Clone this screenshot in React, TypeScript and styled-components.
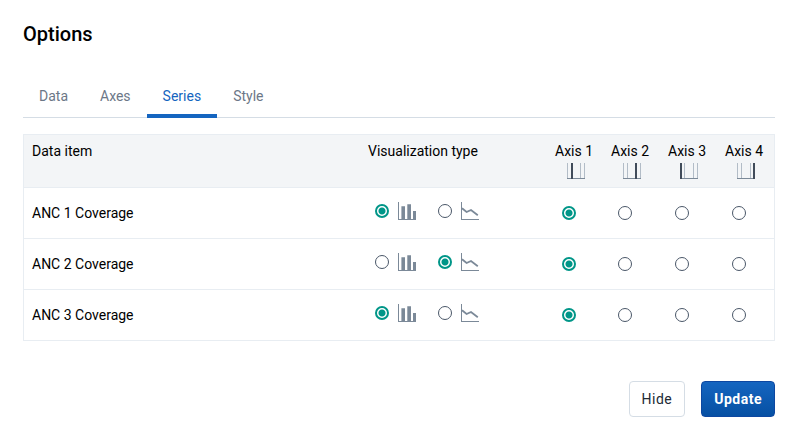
import React, { useState } from "react";
import styled, { createGlobalStyle } from "styled-components";

const GlobalStyle = createGlobalStyle`
  *, *::before, *::after { box-sizing: border-box; }
  body {
    margin: 0;
    background: #fff;
    color: #000;
    font-family: Roboto, sans-serif;
    font-size: 14px;
    line-height: 18px;
  }
`;

const Dialog = styled.main`
  padding: 22px 22px 24px 23px;
`;

const Title = styled.h1`
  margin: 0;
  font-size: 20px;
  line-height: 24px;
  font-weight: 500;
`;

const TabBar = styled.div`
  display: flex;
  margin-top: 28px;
  border-bottom: 1px solid #d5dde5;
`;

const Tab = styled.button<{ $active: boolean }>`
  margin: 0 0 -1px;
  padding: 13px 16px 9px;
  border: 0;
  border-bottom: 4px solid ${(p) => (p.$active ? "#1565c0" : "transparent")};
  background: none;
  color: ${(p) => (p.$active ? "#1565c0" : "#6c7787")};
  font: inherit;
  line-height: 18px;
  cursor: pointer;
`;

const Table = styled.table`
  width: 100%;
  margin-top: 16px;
  border: 1px solid #e8edf2;
  border-spacing: 0;
  table-layout: fixed;
`;

const Column = styled.col<{ $width?: number }>`
  width: ${(p) => (p.$width ? `${p.$width}px` : "auto")};
`;

const HeadCell = styled.th`
  height: 53px;
  padding: 7px 0 0 8px;
  border-bottom: 1px solid #e8edf2;
  background: #f3f5f7;
  font-weight: 400;
  text-align: left;
  vertical-align: top;
  white-space: nowrap;

  svg {
    display: block;
    margin: 3px 0 0 12px;
  }
`;

const AxisHeadCell = styled(HeadCell)`
  padding-left: 9px;
`;

const Row = styled.tr`
  &:not(:last-child) > * {
    border-bottom: 1px solid #e8edf2;
  }

  &:last-child > * {
    height: 50px;
  }
`;

const NameCell = styled.th`
  height: 51px;
  padding: 0 8px;
  font-weight: 400;
  text-align: left;
`;

const Cell = styled.td`
  padding: 0;
`;

const TypeOptions = styled.div`
  display: flex;
  gap: 22px;
  padding: 0 0 4px 15px;
`;

const TypeOption = styled.label`
  display: flex;
  align-items: center;
  gap: 9px;
`;

const AxisOption = styled.label`
  display: flex;
  padding-left: 16px;
`;

const Radio = styled.input.attrs({ type: "radio" })`
  appearance: none;
  width: 14px;
  height: 14px;
  margin: 0;
  border: 1px solid #4a5768;
  border-radius: 50%;
  background: #fff;

  &:checked {
    border: 2px solid #009688;
    background: radial-gradient(circle, #009688 3px, #fff 4px);
  }
`;

const Actions = styled.div`
  display: flex;
  justify-content: flex-end;
  gap: 16px;
  margin-top: 40px;
`;

const Button = styled.button<{ $primary?: boolean }>`
  height: 36px;
  padding: 0 12px;
  border: 1px solid ${(p) => (p.$primary ? "#0d47a1" : "#d5dde5")};
  border-radius: 4px;
  background: ${(p) => (p.$primary ? "linear-gradient(#1565c0, #0650a3)" : "#fff")};
  color: ${(p) => (p.$primary ? "#fff" : "#212934")};
  font: inherit;
  font-weight: ${(p) => (p.$primary ? 700 : 400)};
  letter-spacing: 0.5px;
  cursor: pointer;
`;

const ColumnIcon = () => (
  <svg width="18" height="18" viewBox="0 0 18 18" role="img" aria-label="Column">
    <path d="M0 0h1v17h17v1H0z" fill="#7b8998" />
    <path d="M3.4 4.3H7V17H3.4zM9.3 2.2H13V17H9.3zM15 9h3v8h-3z" fill="#7b8998" />
  </svg>
);

const LineIcon = () => (
  <svg width="18" height="18" viewBox="0 0 18 18" role="img" aria-label="Line">
    <path d="M0 0h1v17h17v1H0z" fill="#7b8998" />
    <path d="M1 6.2l4.6 3.8 4.4-2 6.8 5.2" fill="none" stroke="#7b8998" strokeWidth="1.8" />
  </svg>
);

const AXIS_LINES = [
  { heavy: 4, light: [0, 13, 17] },
  { heavy: 12, light: [0, 4, 17] },
  { heavy: 0, light: [4, 13, 17] },
  { heavy: 16, light: [0, 4, 13] },
];

const AxisIcon = ({ index }: { index: number }) => (
  <svg width="18" height="16" viewBox="0 0 18 16" aria-hidden="true">
    {AXIS_LINES[index].light.map((x) => (
      <rect key={x} x={x} width="1" height="15" fill="#b2bcc7" />
    ))}
    <rect y="15" width="18" height="1" fill="#7b8998" />
    <rect x={AXIS_LINES[index].heavy} width="2" height="16" fill="#404b5a" />
  </svg>
);

const TABS = ["Data", "Axes", "Series", "Style"];
const AXES = [1, 2, 3, 4];
const TYPES = [
  { id: "column", Icon: ColumnIcon },
  { id: "line", Icon: LineIcon },
];
const SERIES = [
  { name: "ANC 1 Coverage", type: "column" },
  { name: "ANC 2 Coverage", type: "line" },
  { name: "ANC 3 Coverage", type: "column" },
];

export default function App() {
  const [tab, setTab] = useState("Series");

  return (
    <Dialog>
      <GlobalStyle />
      <Title>Options</Title>
      <TabBar role="tablist">
        {TABS.map((name) => (
          <Tab
            key={name}
            type="button"
            role="tab"
            aria-selected={tab === name}
            $active={tab === name}
            onClick={() => setTab(name)}
          >
            {name}
          </Tab>
        ))}
      </TabBar>
      <Table>
        <colgroup>
          <Column />
          <Column $width={186} />
          <Column $width={56} />
          <Column $width={57} />
          <Column $width={57} />
          <Column $width={58} />
        </colgroup>
        <thead>
          <tr>
            <HeadCell scope="col">Data item</HeadCell>
            <HeadCell scope="col">Visualization type</HeadCell>
            {AXES.map((axis, i) => (
              <AxisHeadCell key={axis} scope="col">
                Axis {axis}
                <AxisIcon index={i} />
              </AxisHeadCell>
            ))}
          </tr>
        </thead>
        <tbody>
          {SERIES.map((item) => (
            <Row key={item.name}>
              <NameCell scope="row">{item.name}</NameCell>
              <Cell>
                <TypeOptions>
                  {TYPES.map(({ id, Icon }) => (
                    <TypeOption key={id}>
                      <Radio name={`${item.name} type`} value={id} defaultChecked={item.type === id} />
                      <Icon />
                    </TypeOption>
                  ))}
                </TypeOptions>
              </Cell>
              {AXES.map((axis) => (
                <Cell key={axis}>
                  <AxisOption>
                    <Radio
                      name={`${item.name} axis`}
                      value={axis}
                      aria-label={`${item.name}, axis ${axis}`}
                      defaultChecked={axis === 1}
                    />
                  </AxisOption>
                </Cell>
              ))}
            </Row>
          ))}
        </tbody>
      </Table>
      <Actions>
        <Button type="button">Hide</Button>
        <Button type="button" $primary>
          Update
        </Button>
      </Actions>
    </Dialog>
  );
}
